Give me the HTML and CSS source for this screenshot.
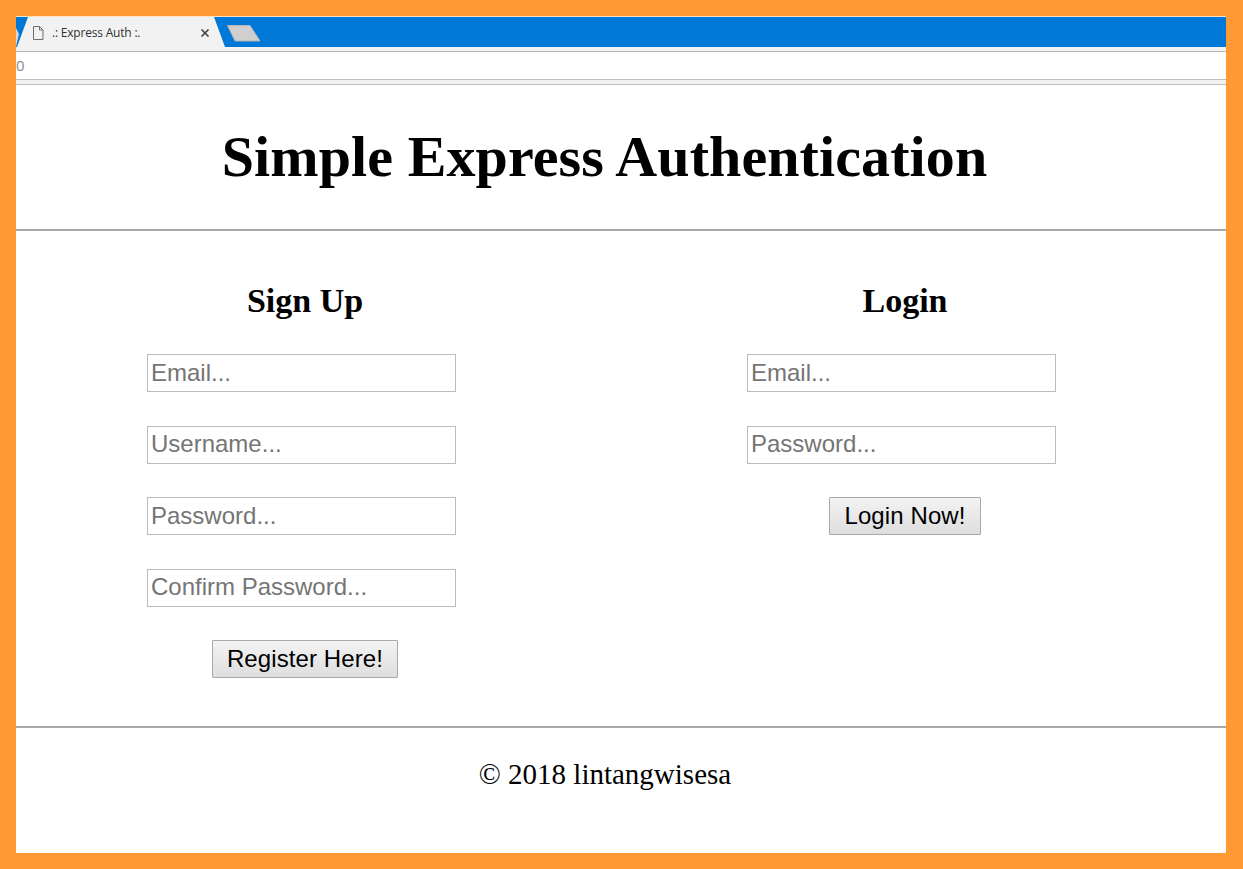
FILE: index.html
```html
<!DOCTYPE html>
<html lang="en">
<head>
<meta charset="utf-8">
<title>.: Express Auth :.</title>
<link rel="stylesheet" href="styles.css">
</head>
<body>
<div class="frame">
  <div class="chrome">
    <div class="tabbar">
      <svg class="tab-shape" width="250" height="35" viewBox="0 0 250 35" aria-hidden="true">
        <polygon points="0,1 12,1 4,17 0,17" fill="#0078d7"/>
        <polygon points="0,1 0,31 3,31 8,15 4,17 0,6" fill="#0078d7"/>
        <polygon points="0,12 3,18 0,31" fill="#d8d8d8"/>
        <polygon points="1,31 12,1 198,1 209,31 209,35 0,35 0,31" fill="#f2f2f2"/>
        <polygon points="211.500,9.500 234,9.500 244,25 219,25" fill="#cfcfcf" stroke="#b5b5b5" stroke-width="1" stroke-linejoin="round"/>
      </svg>
      <svg class="tab-page" width="12" height="14" viewBox="0 0 12 14" aria-hidden="true">
        <path d="M1.500.5h6l3.500 3.500v9.500h-9.500zM7.500.5v3.500h3.500" fill="none" stroke="#6e6e6e"/>
      </svg>
      <span class="tab-title">.: Express Auth :.</span>
      <svg class="tab-close" width="10" height="10" viewBox="0 0 10 10" aria-hidden="true">
        <path d="M1.500 1.500l7 7M8.500 1.500l-7 7" stroke="#444" stroke-width="1.700" fill="none"/>
      </svg>
    </div>
    <div class="strip"></div>
    <div class="address">0</div>
    <div class="strip2"></div>
  </div>
  <main class="page">
    <h1 class="title">Simple Express Authentication</h1>
    <hr class="rule">
    <section class="forms">
      <form class="form">
        <h2 class="form-title">Sign Up</h2>
        <input class="field" type="email" placeholder="Email...">
        <input class="field" type="text" placeholder="Username...">
        <input class="field" type="password" placeholder="Password...">
        <input class="field" type="password" placeholder="Confirm Password...">
        <button class="btn" type="button">Register Here!</button>
      </form>
      <form class="form">
        <h2 class="form-title">Login</h2>
        <input class="field" type="email" placeholder="Email...">
        <input class="field" type="password" placeholder="Password...">
        <button class="btn" type="button">Login Now!</button>
      </form>
    </section>
    <hr class="rule">
    <footer class="footer">© 2018 lintangwisesa</footer>
  </main>
</div>
</body>
</html>
```
FILE: styles.css
```css
* { box-sizing: border-box; }
html, body { margin: 0; padding: 0; }
body { background: #ff9933; }
.frame {
  width: 1243px;
  height: 869px;
  padding: 16px 17px 16px 16px;
  overflow: hidden;
}
.chrome { background: #fff; border-top: 1px solid #ffe3c4; }
.tabbar {
  position: relative;
  height: 30px;
  background: #0078d7;
  display: flex;
  align-items: center;
}
.tab-shape { position: absolute; left: 0; top: -1px; }
.tab-page { position: relative; margin: 1px 0 0 16px; }
.tab-title {
  position: relative;
  margin: 2px 0 0 8px;
  width: 148px;
  font: 12px/16px "Open Sans", sans-serif;
  letter-spacing: -0.2px;
  color: #333;
}
.tab-close { position: relative; margin-top: 1px; }
.strip { height: 5px; background: #f2f2f2; border-bottom: 1px solid #b5b5b5; }
.address {
  height: 27px;
  background: #fff;
  font: 15px/27px "Open Sans", sans-serif;
  color: #888;
}
.strip2 { height: 6px; background: #f2f2f2; border-top: 1px solid #bdbdbd; border-bottom: 1px solid #bdbdbd; }
.page {
  background: #fff;
  height: 768px;
  font-family: "Liberation Serif", "Times New Roman", serif;
  color: #000;
}
.title {
  margin: 0;
  height: 144px;
  padding-right: 33px;
  text-align: center;
  font-size: 58px;
  letter-spacing: 0.1px;
  line-height: 144px;
  font-weight: bold;
}
.rule {
  margin: 0;
  height: 2px;
  border: 0;
  background: #a8a8a8;
}
.forms {
  height: 495px;
  display: grid;
  grid-template-columns: 578px 578px;
  column-gap: 22px;
}
.form {
  display: flex;
  flex-direction: column;
  align-items: center;
  margin: 0;
}
.form-title {
  margin: 51px 0 34px;
  font-size: 34px;
  line-height: 38px;
  font-weight: bold;
}
.field {
  width: 309px;
  height: 38px;
  margin: 0 7px 33.500px 0;
  padding: 0 3px 1px;
  border: 1px solid #bcbcbc;
  background: #fff;
  font: 24px "Liberation Sans", Arial, sans-serif;
  color: #000;
  flex: none;
}
.field::placeholder { color: #757575; opacity: 1; }
.btn {
  height: 38px;
  padding: 0 14px;
  border: 1px solid #a9a9a9;
  border-radius: 1px;
  background: linear-gradient(#f3f3f3, #dedede);
  font: 24px "Liberation Sans", Arial, sans-serif;
  letter-spacing: 0.1px;
  color: #000;
  flex: none;
}
.footer {
  padding: 29px 32px 0 0;
  text-align: center;
  font-size: 29px;
  line-height: 34px;
}
```
